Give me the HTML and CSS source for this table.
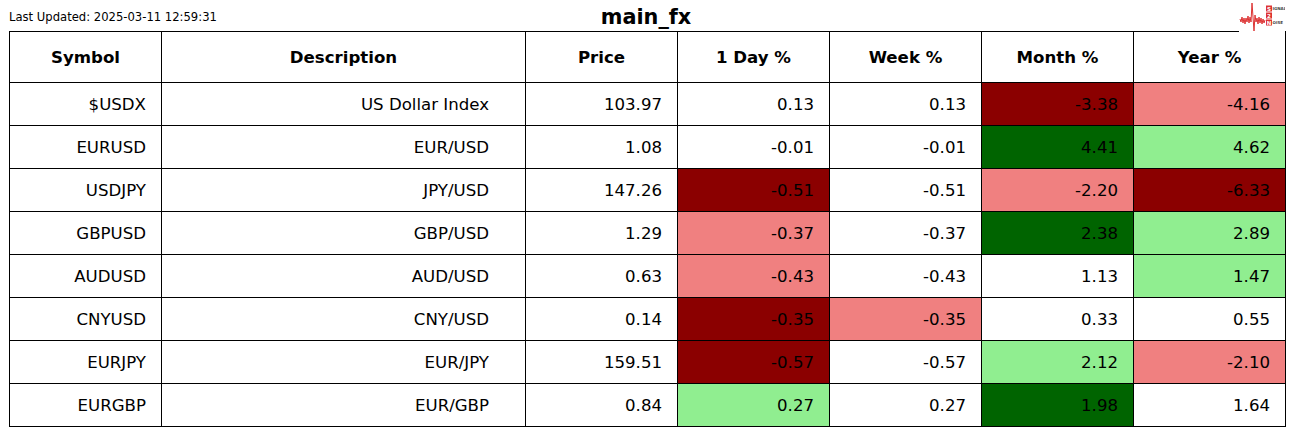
FILE: index.html
```html
<!DOCTYPE html>
<html lang="en">
<head>
<meta charset="utf-8">
<title>main_fx</title>
<link rel="stylesheet" href="styles.css">
</head>
<body>
<div class="page">
  <header class="topbar">
    <div class="updated">Last Updated: 2025-03-11 12:59:31</div>
    <h1 class="title">main_fx</h1>
    <div class="spacer"></div>
  </header>
  <div class="logo">
    <svg width="46" height="33" viewBox="0 0 46 33" xmlns="http://www.w3.org/2000/svg">
      <polyline fill="none" stroke="#d33" stroke-width="1" stroke-linejoin="round"
        points="1,19 2,22 3,17 4,23 5,18 6,24 7,18 8,22 9,16 10,23 11,17 12,22 13,3 15,31 16,15 17,22 18,18 19,24 20,17 21,23 22,18 23,24 24,19 25,23 26,20"/>
      <rect x="27" y="5.5" width="6" height="6" fill="#d33"/>
      <rect x="27" y="12.5" width="6" height="6" fill="#d33"/>
      <rect x="27" y="19.5" width="6" height="6" fill="#d33"/>
      <text x="30" y="10.5" class="lg-w">S</text>
      <text x="30" y="17.5" class="lg-w">2</text>
      <text x="30" y="24.5" class="lg-w">N</text>
      <text x="33.5" y="10.3" class="lg-g">IGNAL</text>
      <text x="33.5" y="24.3" class="lg-g">OISE</text>
    </svg>
  </div>
  <table class="fx">
    <colgroup>
      <col class="c-sym"><col class="c-desc"><col class="c-num"><col class="c-num"><col class="c-num"><col class="c-num"><col class="c-num">
    </colgroup>
    <thead>
      <tr>
        <th>Symbol</th><th>Description</th><th>Price</th><th>1 Day %</th><th>Week %</th><th>Month %</th><th>Year %</th>
      </tr>
    </thead>
    <tbody>
      <tr><td class="sym">$USDX</td><td class="desc">US Dollar Index</td><td>103.97</td><td>0.13</td><td>0.13</td><td class="dred">-3.38</td><td class="lred">-4.16</td></tr>
      <tr><td class="sym">EURUSD</td><td class="desc">EUR/USD</td><td>1.08</td><td>-0.01</td><td>-0.01</td><td class="dgreen">4.41</td><td class="lgreen">4.62</td></tr>
      <tr><td class="sym">USDJPY</td><td class="desc">JPY/USD</td><td>147.26</td><td class="dred">-0.51</td><td>-0.51</td><td class="lred">-2.20</td><td class="dred">-6.33</td></tr>
      <tr><td class="sym">GBPUSD</td><td class="desc">GBP/USD</td><td>1.29</td><td class="lred">-0.37</td><td>-0.37</td><td class="dgreen">2.38</td><td class="lgreen">2.89</td></tr>
      <tr><td class="sym">AUDUSD</td><td class="desc">AUD/USD</td><td>0.63</td><td class="lred">-0.43</td><td>-0.43</td><td>1.13</td><td class="lgreen">1.47</td></tr>
      <tr><td class="sym">CNYUSD</td><td class="desc">CNY/USD</td><td>0.14</td><td class="dred">-0.35</td><td class="lred">-0.35</td><td>0.33</td><td>0.55</td></tr>
      <tr><td class="sym">EURJPY</td><td class="desc">EUR/JPY</td><td>159.51</td><td class="dred">-0.57</td><td>-0.57</td><td class="lgreen">2.12</td><td class="lred">-2.10</td></tr>
      <tr><td class="sym">EURGBP</td><td class="desc">EUR/GBP</td><td>0.84</td><td class="lgreen">0.27</td><td>0.27</td><td class="dgreen">1.98</td><td>1.64</td></tr>
    </tbody>
  </table>
</div>
</body>
</html>
```
FILE: styles.css
```css
html, body {
  margin: 0;
  padding: 0;
  background: #fff;
}
body {
  font-family: "DejaVu Sans", "Liberation Sans", sans-serif;
  color: #000;
}
.page {
  position: relative;
  width: 1292px;
  height: 437px;
}
.topbar {
  display: grid;
  grid-template-columns: 1fr auto 1fr;
  align-items: center;
  height: 31px;
  padding: 0 9px;
}
.updated {
  font-size: 11.6px;
  padding-top: 3px;
}
.title {
  margin: 0;
  font-size: 20.8px;
  font-weight: bold;
  padding-top: 2px;
}
.logo {
  position: absolute;
  left: 1239px;
  top: 0;
  width: 46px;
  height: 33px;
  background: #fff;
}
.logo svg { display: block; }
.lg-w {
  font-family: "DejaVu Sans", sans-serif;
  font-size: 5.5px;
  font-weight: bold;
  fill: #fff;
  text-anchor: middle;
}
.lg-g {
  font-family: "DejaVu Sans", sans-serif;
  font-size: 4px;
  font-weight: bold;
  fill: #444;
}
.fx {
  margin-left: 9px;
  border-collapse: collapse;
  table-layout: fixed;
  width: 1275px;
}
.c-sym { width: 152px; }
.c-desc { width: 364px; }
.c-num { width: 152px; }
.fx th, .fx td {
  border: 1px solid #000;
  padding: 0 15px 0 0;
  font-size: 16.6px;
  white-space: nowrap;
  overflow: hidden;
}
.fx th {
  height: 50px;
  font-weight: bold;
  text-align: center;
  padding: 0;
}
.fx td {
  height: 42px;
  text-align: right;
}
.fx td.desc { padding-right: 36px; }
.dred { background: #8b0000; }
.lred { background: #f08080; }
.dgreen { background: #006400; }
.lgreen { background: #90ee90; }
```
